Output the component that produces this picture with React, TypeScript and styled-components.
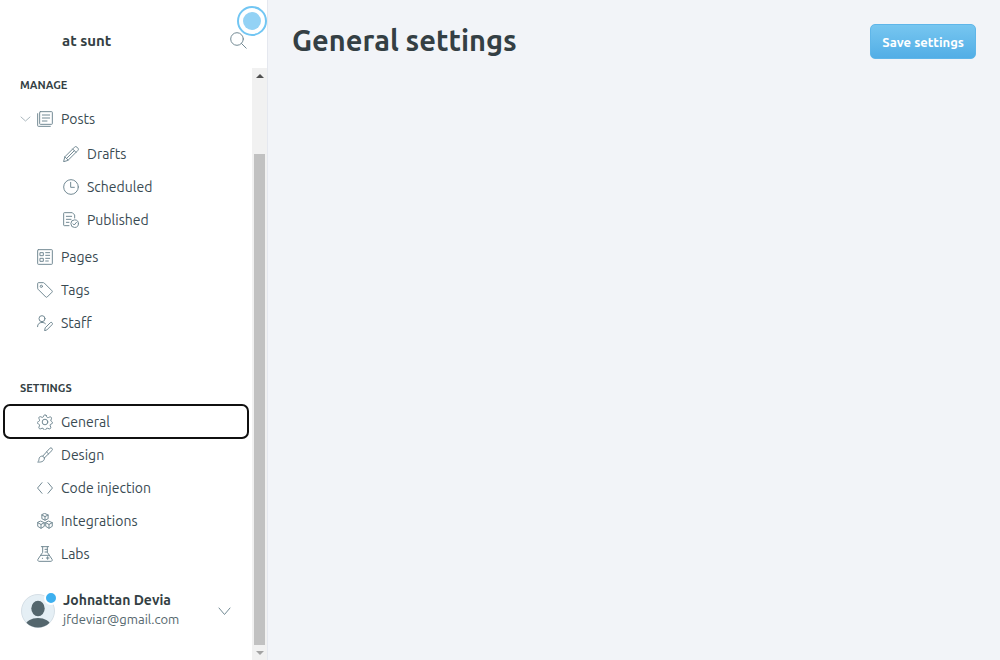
import React from "react";
import styled, { createGlobalStyle } from "styled-components";

const GlobalStyle = createGlobalStyle`
  *, *::before, *::after { box-sizing: border-box; }
  body {
    margin: 0;
    background: #f2f4f8;
    color: #343f44;
    font-family: Ubuntu, "Noto Sans", "Open Sans", sans-serif;
    font-size: 14px;
  }
`;

const Shell = styled.div`
  display: flex;
  height: 100vh;
  overflow: hidden;
`;

const Sidebar = styled.nav`
  position: relative;
  display: flex;
  flex-direction: column;
  flex: 0 0 268px;
  background: #fff;
  border-right: 1px solid #e5e8ef;
`;

const SidebarHeader = styled.header`
  display: flex;
  align-items: center;
  justify-content: space-between;
  flex: none;
  height: 68px;
  padding: 13px 20px 0 62px;
`;

const SiteName = styled.div`
  font-size: 15px;
  line-height: 20px;
  font-weight: 700;
`;

const IconButton = styled.button`
  display: flex;
  padding: 0;
  border: 0;
  background: none;
  color: #738a94;
  cursor: pointer;
`;

const Beacon = styled.span`
  position: absolute;
  top: 6px;
  right: 0;
  display: grid;
  place-items: center;
  width: 30px;
  height: 30px;
  border: 2px solid #72c6f3;
  border-radius: 50%;
  background: #fff;

  &::before {
    content: "";
    width: 18px;
    height: 18px;
    border-radius: 50%;
    background: #93d2f5;
  }
`;

const ScrollArea = styled.div`
  display: flex;
  flex: 1;
  min-height: 0;
`;

const NavBody = styled.div`
  flex: 1;
  min-width: 0;
  overflow: hidden;
  padding: 7px 4px 0;
`;

const SectionTitle = styled.h2`
  margin: 0;
  padding: 0 16px;
  font-size: 11px;
  line-height: 20px;
  font-weight: 600;
  text-transform: uppercase;
`;

const NavList = styled.ul<{ $sub?: boolean }>`
  list-style: none;
  margin: ${(p) => (p.$sub ? "2px 0 4px" : "7px 0 0")};
  padding: ${(p) => (p.$sub ? "0 0 0 26px" : "0")};
`;

const Section = styled.section`
  & + & {
    margin-top: 39px;
  }
`;

const NavRow = styled.div`
  position: relative;
`;

const NavLink = styled.a<{ $focused?: boolean }>`
  display: flex;
  align-items: center;
  gap: 8px;
  height: 33px;
  padding: 0 33px;
  border-radius: 6px;
  color: #394a52;
  line-height: 20px;
  text-decoration: none;
  white-space: nowrap;
  outline: ${(p) => (p.$focused ? "2px solid #101010" : "none")};
  outline-offset: -1px;
`;

const Toggle = styled(IconButton)`
  position: absolute;
  top: 11px;
  left: 16px;
  color: #abb8be;
`;

const Account = styled.button`
  display: flex;
  align-items: center;
  width: 100%;
  margin-top: 21px;
  padding: 0 17px;
  border: 0;
  background: none;
  color: #343f44;
  font: inherit;
  text-align: left;
  cursor: pointer;
`;

const Avatar = styled.span`
  position: relative;
  display: flex;
  margin-right: 8px;
`;

const StatusDot = styled.span`
  position: absolute;
  top: -3px;
  right: -3px;
  width: 14px;
  height: 14px;
  border: 2px solid #fff;
  border-radius: 50%;
  background: #3eb0ef;
`;

const AccountText = styled.span`
  flex: 1;
  min-width: 0;
  padding-bottom: 2px;
`;

const AccountName = styled.span`
  display: block;
  font-size: 14px;
  line-height: 19px;
  font-weight: 700;
`;

const AccountEmail = styled.span`
  display: block;
  color: #54666d;
  font-size: 13px;
  line-height: 19px;
`;

const Scrollbar = styled.div`
  display: flex;
  flex-direction: column;
  align-items: center;
  flex: 0 0 15px;
  background: #f1f1f1;
`;

const ScrollArrow = styled.span<{ $down?: boolean }>`
  display: grid;
  place-items: center;
  flex: 0 0 15px;
  color: ${(p) => (p.$down ? "#a3a3a3" : "#505050")};
`;

const ScrollTrack = styled.div`
  display: flex;
  flex: 1;
  width: 11px;
  align-items: flex-end;
`;

const ScrollThumb = styled.div`
  width: 100%;
  height: 87.3%;
  background: #c1c1c1;
`;

const Main = styled.main`
  flex: 1;
  min-width: 0;
  padding: 24px;
`;

const PageHeader = styled.header`
  display: flex;
  align-items: flex-start;
  justify-content: space-between;
`;

const PageTitle = styled.h1`
  margin: 0;
  font-size: 29px;
  line-height: 32px;
  font-weight: 700;
`;

const SaveButton = styled.button`
  height: 35px;
  padding: 0 11px;
  border: 1px solid #5fb6e9;
  border-radius: 5px;
  background: linear-gradient(#77c6f0, #52aee6);
  color: #fff;
  font: 600 13px/20px Ubuntu, "Noto Sans", "Open Sans", sans-serif;
  white-space: nowrap;
  cursor: pointer;
`;

const Glyph = styled.svg`
  flex: none;
  display: block;
  fill: none;
  stroke: currentColor;
  stroke-linecap: round;
  stroke-linejoin: round;
`;

const LinkGlyph = styled(Glyph)`
  color: #738a94;
  stroke-width: 1.5;
`;

const shapes = {
  posts: (
    <>
      <rect x="4" y="1" width="19" height="19" rx="1" />
      <path d="M1 4v18a1 1 0 0 0 1 1h18M8 6h11M8 10.500h11M8 15h7" />
    </>
  ),
  drafts: (
    <>
      <path d="M1 23l1.800-6.800L17.300 1.700a2.500 2.500 0 0 1 3.600 0l1.400 1.400a2.500 2.500 0 0 1 0 3.600L7.800 21.200z" />
      <path d="M2.800 16.200l5 5M14.500 4.500l5 5M17 7L5.300 18.700" />
    </>
  ),
  scheduled: (
    <>
      <circle cx="12" cy="12" r="11" />
      <path d="M11.500 5v7.500H17" />
    </>
  ),
  published: (
    <>
      <path d="M9 20.500H2a1 1 0 0 1-1-1V2a1 1 0 0 1 1-1h12l3.500 3.500V9M5 6.500h8M5 11h7M5 15.500h4" />
      <circle cx="17.500" cy="17.500" r="5.700" />
      <path d="M15 17.700l1.800 1.800 3.400-4" />
    </>
  ),
  pages: (
    <>
      <rect x="1" y="1" width="22" height="22" rx="1" />
      <rect x="5" y="5.500" width="4.500" height="4.500" />
      <rect x="5" y="14" width="4.500" height="4.500" />
      <path d="M13 5.500h6M13 9.500h6M13 14h6M13 18h4" />
    </>
  ),
  tags: (
    <>
      <path d="M1 2a1 1 0 0 1 1-1h7.500a2 2 0 0 1 1.400.6L22.500 13.200a1.500 1.500 0 0 1 0 2.100l-7.200 7.200a1.500 1.500 0 0 1-2.100 0L1.600 10.900A2 2 0 0 1 1 9.500z" />
      <circle cx="6.500" cy="6.500" r="1.700" />
    </>
  ),
  staff: (
    <>
      <circle cx="7.500" cy="5.500" r="4.500" />
      <path d="M.8 17.500c0-4.200 2.800-6.300 6.700-6.300 2.200 0 4 .6 5.200 1.900" />
      <path d="M11.500 23l.8-3.800 7.600-7.600a1.800 1.800 0 0 1 2.600 0l.2.200a1.800 1.800 0 0 1 0 2.600L15.200 22z" />
    </>
  ),
  general: (
    <>
      <circle cx="12" cy="12" r="4.200" />
      <path d="M13.800 2.300l.8 1.900a2 2 0 0 0 2.600 1.100l1.900-.8a2 2 0 0 1 2.600 2.600l-.8 1.900a2 2 0 0 0 1.100 2.600l.5.200a1.500 1.500 0 0 1 0 2.700l-1.600.6a2 2 0 0 0-1.100 2.600l.8 1.900a2 2 0 0 1-2.600 2.600l-1.900-.8a2 2 0 0 0-2.600 1.100l-.4 1a1.500 1.500 0 0 1-2.700 0l-.4-1a2 2 0 0 0-2.600-1.100l-1.900.8a2 2 0 0 1-2.600-2.600l.8-1.900a2 2 0 0 0-1.100-2.600l-1.400-.6a1.500 1.500 0 0 1 0-2.700l1.400-.6a2 2 0 0 0 1.100-2.600l-.8-1.900a2 2 0 0 1 2.600-2.600l1.900.8A2 2 0 0 0 9.600 4.200l.8-1.900a1.800 1.800 0 0 1 3.400 0z" />
    </>
  ),
  design: (
    <>
      <path d="M8.500 13.800L19.200 2a2.300 2.300 0 0 1 3.300 3.200L11 16.500" />
      <path d="M11 16.500c1 4-3.500 6.800-10 6 2.200-1.500 1.600-3.200 2.300-5.600.8-2.600 3.200-3.600 5.200-3.100 1.300.4 2.200 1.400 2.500 2.700zM14.500 7.500l3 3" />
    </>
  ),
  code: <path d="M7.500 4L.8 12l6.700 8M16.500 4l6.700 8-6.700 8" />,
  integrations: (
    <>
      <path d="M12 .8l4.700 2.200v5.500L12 10.800 7.300 8.500V3zM7.300 3L12 5.400 16.700 3M12 5.400v5.400" />
      <path d="M6 12.300l4.900 2.200V20L6 22.900 1.100 20v-5.500zM1.100 14.500L6 17.200l4.900-2.700M6 17.200v5.700" />
      <path d="M18 12.300l4.900 2.200V20L18 22.900 13.100 20v-5.500zM13.100 14.500l4.900 2.700 4.900-2.700M18 17.200v5.700" />
    </>
  ),
  labs: (
    <>
      <path d="M6.500 1h11M8.500 1v8.500L1.400 20a2 2 0 0 0 1.700 3h17.800a2 2 0 0 0 1.700-3L15.500 9.500V1M5.500 14h13M12 5h3.500M12 9h3.500" />
      <path d="M16 16v4M14 18h4M8 18.500h.5" />
    </>
  ),
};

type IconName = keyof typeof shapes;

const Icon = ({ name }: { name: IconName }) => (
  <LinkGlyph width="16" height="16" viewBox="0 0 24 24" aria-hidden="true">
    {shapes[name]}
  </LinkGlyph>
);

interface Item {
  label: string;
  icon: IconName;
  focused?: boolean;
  children?: Item[];
}

const sections: { title: string; items: Item[] }[] = [
  {
    title: "Manage",
    items: [
      {
        label: "Posts",
        icon: "posts",
        children: [
          { label: "Drafts", icon: "drafts" },
          { label: "Scheduled", icon: "scheduled" },
          { label: "Published", icon: "published" },
        ],
      },
      { label: "Pages", icon: "pages" },
      { label: "Tags", icon: "tags" },
      { label: "Staff", icon: "staff" },
    ],
  },
  {
    title: "Settings",
    items: [
      { label: "General", icon: "general", focused: true },
      { label: "Design", icon: "design" },
      { label: "Code injection", icon: "code" },
      { label: "Integrations", icon: "integrations" },
      { label: "Labs", icon: "labs" },
    ],
  },
];

const NavItem = ({ item }: { item: Item }) => (
  <li>
    <NavRow>
      <NavLink href="#" $focused={item.focused}>
        <Icon name={item.icon} />
        {item.label}
      </NavLink>
      {item.children && (
        <Toggle type="button" aria-label="Collapse posts">
          <Glyph width="11" height="11" viewBox="0 0 11 11">
            <path d="M1 4l4.500 4L10 4" />
          </Glyph>
        </Toggle>
      )}
    </NavRow>
    {item.children && (
      <NavList $sub>
        {item.children.map((child) => (
          <NavItem key={child.label} item={child} />
        ))}
      </NavList>
    )}
  </li>
);

export default function App() {
  return (
    <>
      <GlobalStyle />
      <Shell>
        <Sidebar>
          <SidebarHeader>
            <SiteName>at sunt</SiteName>
            <IconButton type="button" aria-label="Search">
              <Glyph width="17" height="17" viewBox="0 0 17 17">
                <circle cx="7" cy="7" r="6.300" />
                <path d="M11.500 11.500l4.700 4.700" />
              </Glyph>
            </IconButton>
          </SidebarHeader>
          <Beacon />
          <ScrollArea>
            <NavBody>
              {sections.map((section) => (
                <Section key={section.title}>
                  <SectionTitle>{section.title}</SectionTitle>
                  <NavList>
                    {section.items.map((item) => (
                      <NavItem key={item.label} item={item} />
                    ))}
                  </NavList>
                </Section>
              ))}
              <Account type="button">
                <Avatar>
                  <svg width="34" height="34" viewBox="0 0 34 34" aria-hidden="true">
                    <clipPath id="avatar-clip">
                      <circle cx="17" cy="17" r="16.500" />
                    </clipPath>
                    <circle cx="17" cy="17" r="16.500" fill="#e5eff5" stroke="#d5dfe6" />
                    <g clipPath="url(#avatar-clip)" fill="#54666d">
                      <ellipse cx="17" cy="14.500" rx="6.700" ry="7.700" />
                      <ellipse cx="17" cy="32" rx="12.500" ry="8" />
                    </g>
                  </svg>
                  <StatusDot />
                </Avatar>
                <AccountText>
                  <AccountName>Johnattan Devia</AccountName>
                  <AccountEmail>jfdeviar@gmail.com</AccountEmail>
                </AccountText>
                <Glyph width="13" height="9" viewBox="0 0 13 9" color="#738a94">
                  <path d="M1 1l5.500 6.500L12 1" />
                </Glyph>
              </Account>
            </NavBody>
            <Scrollbar aria-hidden="true">
              <ScrollArrow>
                <svg width="8" height="4" viewBox="0 0 8 4">
                  <path d="M0 4l4-4 4 4z" fill="currentColor" />
                </svg>
              </ScrollArrow>
              <ScrollTrack>
                <ScrollThumb />
              </ScrollTrack>
              <ScrollArrow $down>
                <svg width="8" height="4" viewBox="0 0 8 4">
                  <path d="M0 0l4 4 4-4z" fill="currentColor" />
                </svg>
              </ScrollArrow>
            </Scrollbar>
          </ScrollArea>
        </Sidebar>
        <Main>
          <PageHeader>
            <PageTitle>General settings</PageTitle>
            <SaveButton type="button">Save settings</SaveButton>
          </PageHeader>
        </Main>
      </Shell>
    </>
  );
}
